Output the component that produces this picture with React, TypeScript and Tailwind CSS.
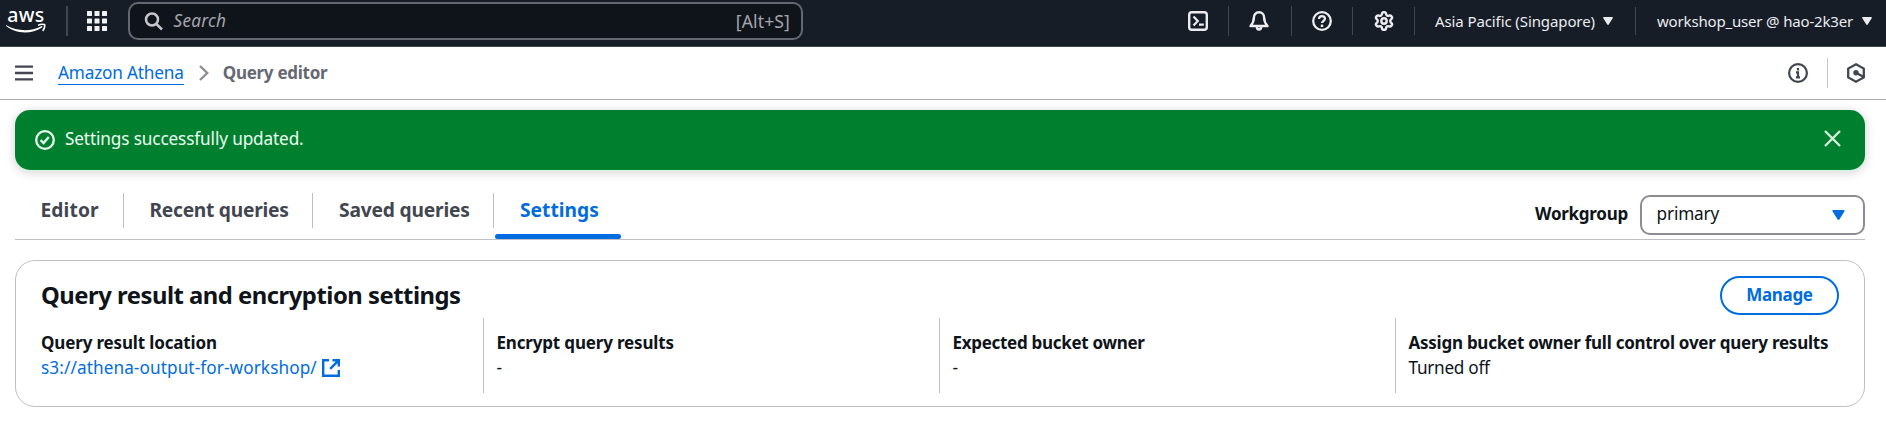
import React from "react";
import { Settings as SettingsGear } from "lucide-react";

type IconProps = { className?: string };

const stroke = { fill: "none", stroke: "currentColor", strokeWidth: 2 };

const AwsLogo = () => (
  <svg width="44" height="42" viewBox="0 0 44 42" className="shrink-0 text-white">
    <text x="1.200" y="21.700" fontSize="19.500" fontWeight="500" fontFamily="'Noto Sans', sans-serif" fill="currentColor" textLength="37" lengthAdjust="spacing">
      aws
    </text>
    <path d="M.5 25.300c10.500 6.200 24.500 6.500 34.600.9 1.100-.6 1.800.7.9 1.300C25.500 34.500 9.500 34.100.2 26.100c-.4-.5-.2-1.100.3-.8z" fill="currentColor" />
    <path d="M32 25.400c2.200-1.300 5-1.300 6.600-.9.600 2-.5 4.600-1.900 6.500" fill="none" stroke="currentColor" strokeWidth="1.500" />
  </svg>
);

const AppsGrid = () => (
  <svg width="20" height="20" viewBox="0 0 20 20" className="shrink-0" fill="#f0f1f4">
    {[0, 7.5, 15].map((y) =>
      [0, 7.5, 15].map((x) => <rect key={`${x}-${y}`} x={x} y={y} width="5" height="5" rx=".6" />),
    )}
  </svg>
);

const SearchIcon = () => (
  <svg width="20" height="20" viewBox="0 0 20 20" className="shrink-0 text-[#c6c6cd]" {...stroke} strokeWidth="2.500">
    <circle cx="8" cy="8.500" r="6" />
    <path d="m12.300 12.800 5.700 5.700" />
  </svg>
);

const CloudShell = () => (
  <svg width="20" height="20" viewBox="0 0 20 20" {...stroke} strokeWidth="2.400">
    <rect x="1.200" y="1.200" width="17.600" height="17.600" rx="2.600" />
    <path d="m5.500 5.500 4.300 4.500-4.300 4.500M11 13.600h4.800" strokeWidth="2.200" />
  </svg>
);

const Bell = () => (
  <svg width="20" height="20" viewBox="0 0 20 20" {...stroke} strokeWidth="2.400" strokeLinejoin="round">
    <path d="M10 1.300c3.100 0 5.100 2.300 5.100 5.300 0 4.300.9 5.700 3.400 8.400h-17c2.500-2.700 3.400-4.100 3.400-8.400 0-3 2-5.300 5.100-5.300z" />
    <path d="M7.800 16c.2 1.700 1 2.500 2.200 2.500s2-.8 2.200-2.500" />
  </svg>
);

const Help = () => (
  <svg width="20" height="20" viewBox="0 0 20 20" {...stroke} strokeWidth="2.300">
    <circle cx="10" cy="10" r="8.800" />
    <path d="M7 8.100c0-1.900 1.200-3 3-3s3 1.100 3 2.700c0 2.200-3 2.200-3 4.300" strokeWidth="2.200" />
    <path d="M10 13.600V16" strokeWidth="2.400" />
  </svg>
);

const Gear = () => <SettingsGear width={20} height={20} viewBox="0.800 0.800 22.400 22.400" strokeWidth={2.7} />;

const Caret = ({ className = "" }: IconProps) => (
  <svg width="10" height="8" viewBox="0 0 10 8" className={className} fill="currentColor">
    <path d="M.9 0h8.200c.7 0 1 .7.6 1.200L5.700 7.500c-.3.500-1 .5-1.400 0L.3 1.200C-.1.700.2 0 .9 0z" />
  </svg>
);

const MenuIcon = () => (
  <svg width="18" height="16" viewBox="0 0 18 16" {...stroke} strokeWidth="2.300" className="shrink-0 text-[#424650]">
    <path d="M0 1.600h18M0 8h18M0 14.400h18" />
  </svg>
);

const ChevronRight = () => (
  <svg width="10" height="16" viewBox="0 0 10 16" {...stroke} strokeWidth="2.400" className="shrink-0 text-[#8c8c94]">
    <path d="m1 1 7.200 7L1 15" />
  </svg>
);

const Info = () => (
  <svg width="20" height="20" viewBox="0 0 20 20" {...stroke} strokeWidth="2.200">
    <circle cx="10" cy="10" r="8.900" />
    <path d="M10 5v2.400M8 9.300h2v4.500M8 14.300h4" />
  </svg>
);

const Hexagon = () => (
  <svg width="18" height="20" viewBox="0 0 18 20" {...stroke} strokeWidth="2.300">
    <path d="M9 1.300 16.800 5.600v8.800L9 18.700l-7.800-4.300V5.600z" />
    <circle cx="9" cy="9.800" r="2.700" fill="currentColor" stroke="none" />
    <path d="m9 9.800 7.800 4.300" />
  </svg>
);

const SuccessIcon = () => (
  <svg width="20" height="20" viewBox="0 0 20 20" {...stroke} strokeWidth="2.300" className="shrink-0">
    <circle cx="10" cy="10" r="8.800" />
    <path d="m5.600 10.200 3 2.900 5.200-6" />
  </svg>
);

const CloseIcon = () => (
  <svg width="17" height="17" viewBox="0 0 17 17" {...stroke} strokeWidth="2.400" className="mb-[3px] text-[#d5ecdc]">
    <path d="m1 1 15 15M16 1 1 16" />
  </svg>
);

const ExternalIcon = () => (
  <svg width="18" height="18" viewBox="0 0 18 18" {...stroke} strokeWidth="2.400" className="shrink-0">
    <path d="M7 1.200H1.200v15.600h15.600V11M10.500 1.200h6.300v6.300M16.800 1.200l-8.600 8.600" />
  </svg>
);

const TopBar = () => (
  <header className="flex h-[47px] items-start border-b border-[#424650] bg-[#161d26] text-[#ebebf0]">
    <div className="flex h-[42px] w-full items-center">
      <div className="flex w-[66px] pl-1.5">
        <AwsLogo />
      </div>
      <span className="h-[30px] w-0.5 bg-[#424650]" />
      <button className="ml-[19px]">
        <AppsGrid />
      </button>
      <div className="ml-[21px] flex h-[38px] w-[675px] items-center rounded-[10px] border-2 border-[#656871] bg-[#0f141a] pl-3.5 pr-[11px]">
        <SearchIcon />
        <span className="ml-[9.500px] grow text-[17.2px] italic leading-6 tracking-[0.24px] text-[#a4a4ad]">Search</span>
        <span className="text-[17.6px] leading-6 tracking-[0.1px] text-[#a4a4ad]">[Alt+S]</span>
      </div>
      <nav className="ml-auto flex items-center">
        <button className="mr-5"><CloudShell /></button>
        <span className="h-[30px] w-px bg-[#424650]" />
        <button className="ml-5 mr-[22px]"><Bell /></button>
        <span className="h-[30px] w-px bg-[#424650]" />
        <button className="mx-5"><Help /></button>
        <span className="h-7 w-px bg-[#424650]" />
        <button className="ml-[21px] mr-5"><Gear /></button>
        <span className="h-7 w-px bg-[#424650]" />
        <button className="ml-5 flex w-[200px] items-center whitespace-nowrap text-[15px] tracking-[-0.1px]">
          <span className="w-[168px] text-left">Asia Pacific (Singapore)</span>
          <Caret />
        </button>
        <span className="h-7 w-px bg-[#424650]" />
        <button className="ml-[21px] flex w-[229px] items-center whitespace-nowrap text-[15px] tracking-[-0.17px]">
          <span className="w-[205px] text-left">workshop_user @ hao-2k3er</span>
          <Caret />
        </button>
      </nav>
    </div>
  </header>
);

const Breadcrumbs = () => (
  <div className="flex h-[53px] items-center border-b border-[#b0b0b4] pl-[15px] pr-[21px] text-[17.2px] text-[#424650]">
    <button><MenuIcon /></button>
    <a href="#" className="ml-[25px] border-b border-[#006ce0] leading-[22px] tracking-[-0.18px] text-[#006ce0]">Amazon Athena</a>
    <span className="ml-[15px]"><ChevronRight /></span>
    <span className="ml-[14px] text-[17px] font-bold leading-[22px] tracking-[-0.27px] text-[#656871]">Query editor</span>
    <button className="ml-auto"><Info /></button>
    <span className="ml-[19px] mr-[19px] h-[30px] w-px bg-[#c6c6cd]" />
    <button><Hexagon /></button>
  </div>
);

const Flash = () => (
  <div className="flex h-[60px] items-center rounded-[15px] bg-[#00802f] pl-5 pr-6 text-[#ebfff0] shadow-[0_1px_0_0_#d0fbe0,0_2px_10px_1px_rgba(0,7,22,0.16)]">
    <SuccessIcon />
    <span className="ml-[10px] pb-0.5 text-[17.2px] leading-6 tracking-[-0.13px]">Settings successfully updated.</span>
    <button className="ml-auto"><CloseIcon /></button>
  </div>
);

const divider = "before:h-[35px] before:w-px before:bg-[#c0c0c4]";

const Tabs = () => (
  <div className="mt-[23px] flex h-[47px] border-b border-[#c0c0c4]">
    <div className="flex text-[19.2px] font-bold leading-[33px] text-[#424650]">
      <button className="flex w-[108px] items-start pl-[25.500px] tracking-[0.12px]">Editor</button>
      <button className={`flex w-[189px] items-start tracking-[-0.26px] ${divider}`}>
        <span className="ml-[25.500px]">Recent queries</span>
      </button>
      <button className={`flex w-[181px] items-start tracking-[-0.17px] ${divider}`}>
        <span className="ml-[26px]">Saved queries</span>
      </button>
      <button className={`flex items-start tracking-[0.02px] text-[#006ce0] ${divider}`}>
        <span className="ml-px flex h-[46px] w-[126px] flex-col justify-between">
          <span className="pl-[25px] text-left">Settings</span>
          <span className="h-[5px] rounded-[2.500px] bg-[#006ce0]" />
        </span>
      </button>
    </div>
    <div className="ml-auto mt-0.5 flex h-10 items-center text-[17.2px] text-[#0f141a]">
      <span className="pb-0.5 text-[17px] font-bold leading-6 tracking-[-0.26px]">Workgroup</span>
      <div className="ml-3 flex h-10 w-[225px] items-center justify-between rounded-[10px] border-2 border-[#8c8c94] pl-[14.500px] pr-[18.500px]">
        <span className="pb-0.5 leading-6 tracking-[-0.14px]">primary</span>
        <span className="text-[#006ce0]"><Caret className="h-[10px] w-[13px]" /></span>
      </div>
    </div>
  </div>
);

const Settings = () => (
  <section className="mt-5 h-[147px] rounded-[20px] border border-[#c0c0c4] pl-[25px] pr-[25px] pt-[15px] text-[#0f141a]">
    <div className="flex h-[39px] items-center justify-between">
      <h2 className="pb-px text-[23.8px] font-bold leading-8 tracking-[-0.48px]">Query result and encryption settings</h2>
      <button className="h-[39px] w-[119px] rounded-full border-2 border-[#006ce0] pb-px text-[17px] font-bold leading-6 tracking-[-0.33px] text-[#006ce0]">
        Manage
      </button>
    </div>
    <dl className="mt-[3px] grid h-[75px] grid-cols-[442px_456px_456px_1fr] whitespace-nowrap text-[17.2px] leading-[25px]">
      <div className="pt-3">
        <dt className="text-[17px] font-bold tracking-[-0.15px]">Query result location</dt>
        <dd>
          <a href="#" className="flex items-center gap-[5px] tracking-[0.09px] text-[#006ce0]">
            s3://athena-output-for-workshop/
            <ExternalIcon />
          </a>
        </dd>
      </div>
      <div className="border-l border-[#c0c0c4] pl-[12.500px] pt-3">
        <dt className="text-[17px] font-bold tracking-[-0.17px]">Encrypt query results</dt>
        <dd>-</dd>
      </div>
      <div className="border-l border-[#c0c0c4] pl-[12.500px] pt-3">
        <dt className="text-[17px] font-bold tracking-[-0.3px]">Expected bucket owner</dt>
        <dd>-</dd>
      </div>
      <div className="border-l border-[#c0c0c4] pl-[12.500px] pt-3">
        <dt className="text-[17px] font-bold tracking-[-0.25px]">Assign bucket owner full control over query results</dt>
        <dd className="tracking-[-0.28px]">Turned off</dd>
      </div>
    </dl>
  </section>
);

export default function App() {
  return (
    <div className="h-[427px] w-[1886px] overflow-hidden bg-white font-['Noto_Sans',sans-serif]">
      <TopBar />
      <Breadcrumbs />
      <main className="pl-[15px] pr-[21px] pt-[10px]">
        <Flash />
        <Tabs />
        <Settings />
      </main>
    </div>
  );
}
